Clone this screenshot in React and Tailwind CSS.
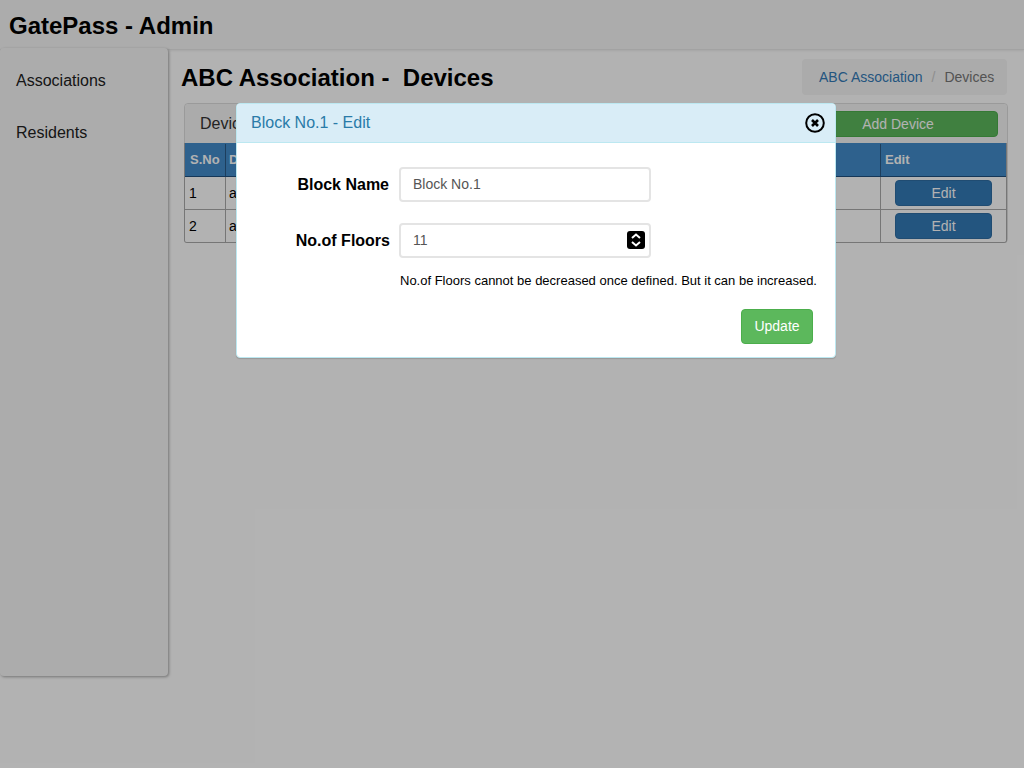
import React from "react";

const font = { fontFamily: '"Liberation Sans", Arial, sans-serif' };

function Row({ n, letter }) {
  return (
    <div className="flex h-[33px] border-b border-[#aaaaaa] bg-white text-[14px] text-black last:h-[32px] last:border-b-0">
      <div className="flex w-[41px] items-center border-r border-[#aaaaaa] pl-[4px]">{n}</div>
      <div className="flex flex-1 items-center border-r border-[#aaaaaa] pl-[3px]">{letter}</div>
      <div className="flex w-[125px] items-center justify-start pl-[14px]">
        <div className="flex h-[26px] w-[97px] items-center justify-center rounded-[4px] border border-[#2e6da4] bg-[#337ab7] text-[14px] text-white">Edit</div>
      </div>
    </div>
  );
}

export default function App() {
  return (
    <div className="relative h-[768px] w-[1024px] overflow-hidden bg-white" style={font}>
      <header className="flex h-[50px] items-center border-b border-[#e8e8e8] bg-[#f7f7f7] pl-[9px] pt-[2px] text-[24px] font-bold text-black shadow-[0_1px_2px_rgba(0,0,0,0.08)]">
        GatePass - Admin
      </header>
      <div className="flex items-start">
        <aside className="relative z-10 -mt-[2px] flex h-[628px] w-[168px] shrink-0 flex-col rounded-[4px] bg-[#f7f7f7] pl-[16px] pt-[23px] text-[16px] text-[#222] shadow-[1px_1px_3px_rgba(0,0,0,0.35)]">
          <div className="h-[52px] leading-[20px]">Associations</div>
          <div className="leading-[20px]">Residents</div>
        </aside>
        <main className="flex-1 pl-[13px] pr-[16px]">
          <div className="flex h-[53px] items-start justify-between">
            <h1 className="pt-[14px] text-[24px] font-bold leading-[28px] text-black">ABC Association -&nbsp; Devices</h1>
            <div className="mr-[1px] mt-[9px] flex h-[36px] w-[205px] items-center rounded-[4px] bg-[#f5f5f5] pl-[17px] text-[14px]">
              <span className="text-[#337ab7]">ABC Association</span>
              <span className="px-[9px] text-[#ccc]">/</span>
              <span className="text-[#777]">Devices</span>
            </div>
          </div>
          <section className="ml-[3px] w-[824px] rounded-[4px] border border-[#ddd]">
            <div className="flex h-[39px] items-center justify-between rounded-t-[4px] bg-[#f5f5f5] pl-[15px] pr-[9px] text-[16px] text-[#333]">
              <span>Devices</span>
              <div className="mt-[1px] flex h-[26px] w-[200px] items-center justify-center rounded-[4px] border border-[#4cae4c] bg-[#5cb85c] text-[14px] text-white">Add Device</div>
            </div>
            <div className="-mb-px -ml-px overflow-hidden rounded-b-[3px] border-x border-b border-[#aaaaaa]">
              <div className="flex h-[34px] border-b border-[#1f4f7f] bg-[#428bca] pt-[1px] text-[13px] font-bold text-white">
                <div className="flex w-[41px] items-center border-r border-[#2a5a86] pl-[5px]">S.No</div>
                <div className="flex flex-1 items-center border-r border-[#2a5a86] pl-[3px]">Device</div>
                <div className="flex w-[125px] items-center pl-[4px]">Edit</div>
              </div>
              <Row n="1" letter="a" />
              <Row n="2" letter="a" />
            </div>
          </section>
        </main>
      </div>

      <div className="absolute inset-0 z-20 bg-black/30" />

      <div className="absolute left-[236px] top-[103px] z-30 flex h-[255px] w-[600px] flex-col overflow-hidden rounded-[4px] border border-[#bce8f1] bg-white shadow-[0_1px_1px_rgba(0,0,0,0.15)]">
        <div className="flex h-[39px] shrink-0 items-center justify-between border-b border-[#bce8f1] bg-[#d9edf7] pl-[14px] pr-[9px] text-[16px] text-[#2a7ba8]">
          <span>Block No.1 - Edit</span>
          <svg width="22" height="22" viewBox="0 0 22 22" fill="none" stroke="#000">
            <circle cx="11" cy="11" r="8.8" strokeWidth="2" />
            <path d="M8 8l6 6M14 8l-6 6" strokeWidth="2.6" />
          </svg>
        </div>
        <div className="flex-1 pt-[23px]">
          <div className="flex h-[36px] items-center">
            <label className="w-[152px] pt-[1px] text-right text-[16px] font-bold text-black">Block Name</label>
            <div className="ml-[10px] flex h-[35px] w-[252px] items-center rounded-[4px] border-2 border-[#e4e4e4] pl-[12px] text-[14px] text-[#555]">Block No.1</div>
          </div>
          <div className="mt-[20px] flex h-[36px] items-center">
            <label className="w-[153px] pt-[1px] text-right text-[16px] font-bold text-black">No.of Floors</label>
            <div className="ml-[9px] flex h-[35px] w-[252px] items-center justify-between rounded-[4px] border-2 border-[#e4e4e4] pl-[12px] pr-[4px] text-[14px] text-[#555]">
              <span>11</span>
              <svg width="18" height="18" viewBox="0 0 18 18">
                <rect width="18" height="18" rx="3" fill="#000" />
                <path d="M5 7l4-3.5L13 7M5 11l4 3.5 4-3.5" fill="none" stroke="#fff" strokeWidth="2" />
              </svg>
            </div>
          </div>
          <p className="ml-[163px] mt-[15px] whitespace-nowrap text-[13px] leading-[16px] text-black">No.of Floors cannot be decreased once defined. But it can be increased.</p>
          <div className="mt-[20px] flex justify-end pr-[22px]">
            <div className="flex h-[35px] w-[72px] items-center justify-center rounded-[4px] border border-[#4cae4c] bg-[#5cb85c] text-[14px] text-white">Update</div>
          </div>
        </div>
      </div>
    </div>
  );
}
